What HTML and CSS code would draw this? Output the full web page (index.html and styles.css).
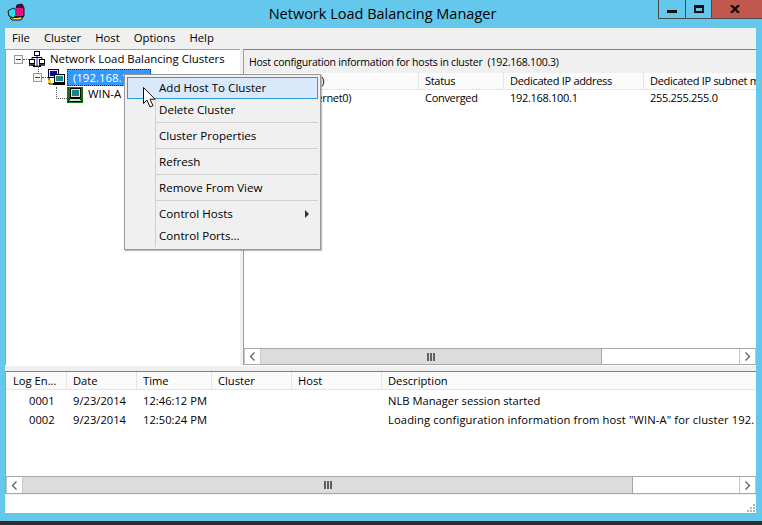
FILE: index.html
```html
<!DOCTYPE html>
<html lang="en">
<head>
<meta charset="utf-8">
<title>Network Load Balancing Manager</title>
<link rel="stylesheet" href="styles.css">
</head>
<body>
<div class="window">
  <header class="titlebar">
    <svg class="app-icon" width="18" height="18" viewBox="0 0 18 18">
      <path d="M10 2l5-1 2 4v8l-3 3H6z" fill="#5a0a3a" stroke="#111"/>
      <path d="M3 15l2 2h9l2-3-3 0z" fill="#f4e24a" stroke="#111"/>
      <path d="M1 8l5-3 3 2v6l-3 2-4-2z" fill="#25e0ee" stroke="#111"/>
      <rect x="8" y="5" width="8" height="8" fill="#f0108a"/>
      <path d="M9 7h1M12 7h1M10.500 9h1M14 9h1M9 11h1M12 11h1" stroke="#70104a"/>
    </svg>
    <h1 class="title">Network Load Balancing Manager</h1>
    <div class="controls">
      <button class="ctl ctl-min" aria-label="Minimize"><span></span></button>
      <button class="ctl ctl-max" aria-label="Maximize"><span></span></button>
      <button class="ctl ctl-close" aria-label="Close">
        <svg width="10" height="8" viewBox="0 0 10 8"><path d="M1 0l8 8M9 0l-8 8" stroke="#111" stroke-width="2.400" fill="none"/></svg>
      </button>
    </div>
  </header>

  <div class="client">
    <nav class="menubar">
      <span>File</span><span>Cluster</span><span>Host</span><span>Options</span><span>Help</span>
    </nav>

    <div class="upper">
      <section class="tree">
        <div class="node node-root">
          <i class="expander"></i><i class="dots-h"></i>
          <svg class="ico" width="16" height="16" viewBox="0 0 16 16">
            <path d="M8 4v12" stroke="#1414e0" stroke-width="1"/>
            <path d="M3 9V6.500h10V9" fill="none" stroke="#000"/>
            <g fill="#fff" stroke="#000"><rect x="5.500" y="0.500" width="5" height="4"/><rect x="0.500" y="8.500" width="5" height="4"/><rect x="10.500" y="8.500" width="5" height="4"/></g>
            <path d="M0 14h6M10 14h6M4 15.500h8" stroke="#000" stroke-width="1.500"/>
          </svg>
          <span class="label">Network Load Balancing Clusters</span>
        </div>
        <div class="node node-cluster">
          <i class="expander"></i><i class="dots-s"></i>
          <svg class="ico" width="17" height="16" viewBox="0 0 17 16">
            <rect x="0.500" y="0.500" width="10" height="8" fill="#e8e8e8" stroke="#000"/><rect x="2" y="2" width="7" height="5" fill="#0808c0"/>
            <rect x="6.500" y="5.500" width="10" height="8" fill="#e8e8e8" stroke="#000"/><rect x="8" y="7" width="7" height="5" fill="#1e8a8a"/>
            <path d="M5 15h12" stroke="#000" stroke-width="2"/><path d="M1 9v6h5" fill="none" stroke="#000"/><rect x="0" y="11" width="3" height="3" fill="#e8d020"/>
          </svg>
          <span class="label label-sel">(192.168.100.3)</span>
        </div>
        <div class="node node-host">
          <i class="dots-elbow"></i>
          <svg class="ico" width="16" height="16" viewBox="0 0 16 16">
            <rect width="16" height="16" fill="#0a7a0a"/>
            <rect x="3.500" y="1.500" width="10" height="9" fill="#e0e0e0" stroke="#000"/><rect x="5" y="3" width="7" height="6" fill="#1e7f7f"/>
            <path d="M1 14.500l2-3h10l2 3z" fill="#d8d8d8" stroke="#000"/>
          </svg>
          <span class="label">WIN-A</span>
        </div>
      </section>

      <div class="vsplit"></div>

      <section class="details">
        <div class="pane-title">Host configuration information for hosts in cluster&nbsp; (192.168.100.3)</div>
        <div class="lv-head hosts-grid">
          <span>Host (Interface)</span><span>Status</span><span>Dedicated IP address</span><span>Dedicated IP subnet mask</span>
        </div>
        <div class="lv-row hosts-grid">
          <span class="col-host">WIN-A(Ethernet0)</span><span>Converged</span><span>192.168.100.1</span><span>255.255.255.0</span>
        </div>
        <div class="fill"></div>
        <div class="hscroll hscroll-top">
          <button class="sb-btn" aria-label="Scroll left"><svg width="7" height="9" viewBox="0 0 7 9"><path d="M5.500 0.500l-4 4 4 4" fill="none" stroke="#606060" stroke-width="1.300"/></svg></button>
          <div class="sb-track"><div class="sb-thumb sb-thumb-top"><i class="grip-bars"></i></div></div>
          <button class="sb-btn" aria-label="Scroll right"><svg width="7" height="9" viewBox="0 0 7 9"><path d="M1.500 0.500l4 4-4 4" fill="none" stroke="#606060" stroke-width="1.300"/></svg></button>
        </div>
      </section>
    </div>

    <section class="log">
      <div class="lv-head log-grid">
        <span>Log En...</span><span>Date</span><span>Time</span><span>Cluster</span><span>Host</span><span>Description</span>
      </div>
      <div class="lv-row log-grid log-first">
        <span class="log-id">0001</span><span>9/23/2014</span><span>12:46:12 PM</span><span></span><span></span><span>NLB Manager session started</span>
      </div>
      <div class="lv-row log-grid">
        <span class="log-id">0002</span><span>9/23/2014</span><span>12:50:24 PM</span><span></span><span></span><span class="log-long">Loading configuration information from host "WIN-A" for cluster 192.</span>
      </div>
      <div class="fill"></div>
      <div class="hscroll hscroll-log">
        <button class="sb-btn" aria-label="Scroll left"><svg width="7" height="9" viewBox="0 0 7 9"><path d="M5.500 0.500l-4 4 4 4" fill="none" stroke="#606060" stroke-width="1.300"/></svg></button>
        <div class="sb-track"><div class="sb-thumb sb-thumb-log"><i class="grip-bars"></i></div></div>
        <button class="sb-btn" aria-label="Scroll right"><svg width="7" height="9" viewBox="0 0 7 9"><path d="M1.500 0.500l4 4-4 4" fill="none" stroke="#606060" stroke-width="1.300"/></svg></button>
      </div>
    </section>

    <footer class="status">
      <svg class="grip" width="10" height="10" viewBox="0 0 10 10"><g fill="#b5b5b5"><rect x="7" y="1" width="2" height="2"/><rect x="4" y="4" width="2" height="2"/><rect x="7" y="4" width="2" height="2"/><rect x="1" y="7" width="2" height="2"/><rect x="4" y="7" width="2" height="2"/><rect x="7" y="7" width="2" height="2"/></g></svg>
    </footer>
  </div>

  <div class="taskbar"></div>

  <ul class="ctx">
    <li class="ctx-item ctx-hot">Add Host To Cluster</li>
    <li class="ctx-item">Delete Cluster</li>
    <li class="ctx-sep"></li>
    <li class="ctx-item">Cluster Properties</li>
    <li class="ctx-sep"></li>
    <li class="ctx-item">Refresh</li>
    <li class="ctx-sep"></li>
    <li class="ctx-item">Remove From View</li>
    <li class="ctx-sep"></li>
    <li class="ctx-item ctx-sub">Control Hosts<i class="arrow"></i></li>
    <li class="ctx-item">Control Ports...</li>
  </ul>

  <svg class="cursor" width="14" height="22" viewBox="0 0 14 22">
    <path d="M1.500 0.500v16l3.500-3.500 3 7 3-1.300-3-6.500h5z" fill="#fff" stroke="#111" stroke-width="1"/>
  </svg>
</div>
</body>
</html>
```

FILE: styles.css
```css
* { box-sizing: border-box; }
html, body { margin: 0; padding: 0; }
body {
  width: 762px;
  height: 525px;
  overflow: hidden;
  font-family: "Open Sans", "Noto Sans", sans-serif;
  font-size: 11.4px;
  color: #000;
}
.window {
  position: relative;
  width: 762px;
  height: 525px;
  background: #63c8eb;
  display: flex;
  flex-direction: column;
  overflow: hidden;
}

/* title bar */
.titlebar {
  height: 28px;
  flex: none;
  display: flex;
  align-items: flex-start;
  justify-content: center;
  position: relative;
}
.app-icon { position: absolute; left: 7px; top: 3px; }
.title {
  margin: 4px 0 0 3px;
  font-size: 14.500px;
  font-weight: 400;
  line-height: 20px;
  color: #000;
}
.controls {
  position: absolute;
  right: 0;
  top: 0;
  display: flex;
  height: 19px;
  border-left: 1px solid #4a4a4a;
  border-bottom: 1px solid #4a4a4a;
}
.ctl {
  padding: 0;
  border: 0;
  background: transparent;
  display: flex;
  align-items: center;
  justify-content: center;
  height: 18px;
}
.ctl-min { width: 27px; border-right: 1px solid #4a4a4a; }
.ctl-min span { width: 10px; height: 3px; background: #111; margin-top: 4px; }
.ctl-max { width: 26px; border-right: 1px solid #4a4a4a; }
.ctl-max span { width: 10px; height: 8px; border: 2px solid #111; border-top-width: 3px; margin-top: -1px; }
.ctl-close { width: 50px; background: #c0584f; padding-right: 5px; }
.ctl-close svg { margin-top: -1px; }

/* client */
.client {
  margin: 0 6px 0 5px;
  height: 486px;
  flex: none;
  display: flex;
  flex-direction: column;
  background: #f0f0f0;
}
.menubar {
  height: 21px;
  flex: none;
  display: flex;
  align-items: center;
  padding: 0 0 2px 7px;
  gap: 14px;
  font-size: 11.300px;
}
.upper {
  height: 317px;
  flex: none;
  display: flex;
  border-bottom: 1px solid #fff;
}
.tree {
  width: 235px;
  flex: none;
  background: #fff;
  border-top: 1px solid #a0a0a0;
  border-left: 1px solid #a0a0a0;
  position: relative;
}
.tree::before {
  content: "";
  position: absolute;
  left: 32px;
  top: 16px;
  height: 8px;
  border-left: 1px dotted #555;
}
.node {
  height: 18px;
  display: flex;
  align-items: center;
  white-space: nowrap;
}
.node-root .label { margin-bottom: 2px; }
.node-host .label { margin-bottom: 3px; }
.expander {
  flex: none;
  width: 9px;
  height: 9px;
  border: 1px solid #9a9a9a;
  background: linear-gradient(#444, #444) center / 5px 1px no-repeat, #f4f4f4;
}
.dots-h {
  flex: none;
  width: 6px;
  border-top: 1px dotted #555;
}
.dots-s {
  flex: none;
  width: 6px;
  border-top: 1px dotted #555;
}
.node-root { padding-left: 8px; }
.node-root .ico { flex: none; margin-right: 5px; }
.node-cluster { padding-left: 27px; }
.node-cluster .ico { flex: none; margin-right: 2px; }
.label-sel {
  display: block;
  width: 84px;
  flex: none;
  background: #3399ff;
  color: #fff;
  outline: 1px dotted #222;
  outline-offset: -1px;
  padding-left: 6px;
  height: 17px;
  line-height: 17px;
}
.node-host { padding-left: 50px; }
.dots-elbow {
  flex: none;
  width: 11px;
  height: 12px;
  margin-top: -4px;
  border-left: 1px dotted #555;
  border-bottom: 1px dotted #555;
}
.node-host .ico { flex: none; margin-right: 5px; }

.vsplit { width: 3px; flex: none; background: #f0f0f0; }

.details {
  flex: 1;
  min-width: 0;
  display: flex;
  flex-direction: column;
  border-top: 1px solid #808080;
  border-left: 1px solid #a0a0a0;
  background: #fff;
}
.pane-title {
  height: 23px;
  flex: none;
  background: #f0f0f0;
  padding: 3px 0 0 5px;
  font-size: 10.500px;
  letter-spacing: -0.230px;
  line-height: 18px;
  white-space: nowrap;
}
.lv-head {
  height: 17px;
  flex: none;
  display: grid;
  align-items: center;
  background: #fbfbfb;
  border-bottom: 1px solid #e5e5e5;
  overflow: hidden;
  white-space: nowrap;
}
.lv-head > span {
  height: 100%;
  line-height: 16px;
  border-right: 1px solid #e5e5e5;
  padding-left: 6px;
  overflow: hidden;
}
.lv-head > span:last-child { border-right: 0; }
.lv-row {
  height: 19px;
  flex: none;
  display: grid;
  align-items: center;
  white-space: nowrap;
  background: #fff;
}
.lv-row > span { padding-left: 6px; }
.hosts-grid {
  grid-template-columns: 175px 85px 140px 112px;
  font-size: 11px;
  letter-spacing: -0.300px;
}
.lv-row.hosts-grid { height: 14px; margin-bottom: 2px; }
.lv-row > span.col-host { padding-left: 23px; }
.log-grid {
  grid-template-columns: 61px 70px 75px 80px 90px 374px;
  font-size: 11.200px;
}
.log-grid > span:first-child { padding-left: 7px; }
.log-grid > span.log-id { padding-left: 23px; }
.log-first { margin-top: 1px; }
.log-long { letter-spacing: 0.120px; }
.fill { flex: 1; background: #fff; }

.hscroll {
  height: 18px;
  flex: none;
  display: flex;
  background: #fff;
  border-top: 1px solid #a8a8a8;
  border-bottom: 1px solid #a8a8a8;
}
.hscroll-top { height: 17px; }
.sb-btn {
  width: 17px;
  flex: none;
  padding: 0;
  border: 1px solid #c8c8c8;
  border-width: 0 1px;
  background: #fff;
  display: flex;
  align-items: center;
  justify-content: center;
}
.sb-track { flex: 1; min-width: 0; background: #fff; display: flex; }
.sb-thumb {
  height: 100%;
  background: #dcdcdc;
  border-right: 1px solid #a8a8a8;
  display: flex;
  align-items: center;
  justify-content: center;
}
.grip-bars {
  display: block;
  width: 8px;
  height: 8px;
  background: repeating-linear-gradient(90deg, #606060 0 2px, transparent 2px 3px);
}
.sb-thumb-top { width: 341px; }
.sb-thumb-log { width: 610px; }

.log {
  flex: 1;
  min-height: 0;
  display: flex;
  flex-direction: column;
  margin-top: 5px;
  border-top: 1px solid #808080;
  border-left: 1px solid #a0a0a0;
  background: #fff;
}
.log .lv-head { height: 18px; }
.log .lv-head > span { line-height: 18px; }

.status {
  height: 19px;
  flex: none;
  margin-top: 1px;
  background: #fff;
  border-bottom: 1px solid #a8a8a8;
  display: flex;
  justify-content: flex-end;
  align-items: flex-end;
}
.grip { display: block; }

.taskbar {
  position: absolute;
  left: 0;
  right: 0;
  bottom: 0;
  height: 4px;
  background: #2d2d2d;
}

/* context menu */
.ctx {
  position: absolute;
  left: 124px;
  top: 74px;
  width: 197px;
  height: 176px;
  margin: 0;
  padding: 2px;
  list-style: none;
  background: #f0f0f0;
  border: 1px solid #979797;
  box-shadow: 1px 1px 1px rgba(0,0,0,.25);
  font-size: 11.600px;
}
.ctx::before {
  content: "";
  position: absolute;
  left: 30px;
  top: 2px;
  bottom: 2px;
  border-left: 1px solid #d0d0d0;
}
.ctx-item {
  position: relative;
  height: 22px;
  line-height: 21px;
  padding-left: 32px;
  white-space: nowrap;
}
.ctx-hot {
  background: #d9e9fb;
  outline: 1px solid #2f9bd3;
  outline-offset: -1px;
}
.ctx-sep {
  height: 4px;
  margin-left: 28px;
  background: linear-gradient(#d0d0d0, #d0d0d0) 0 1px / 100% 1px no-repeat;
}
.arrow {
  position: absolute;
  right: 9px;
  top: 7px;
  border-left: 4px solid #333;
  border-top: 4px solid transparent;
  border-bottom: 4px solid transparent;
}
.cursor {
  position: absolute;
  left: 142px;
  top: 87px;
}
```
